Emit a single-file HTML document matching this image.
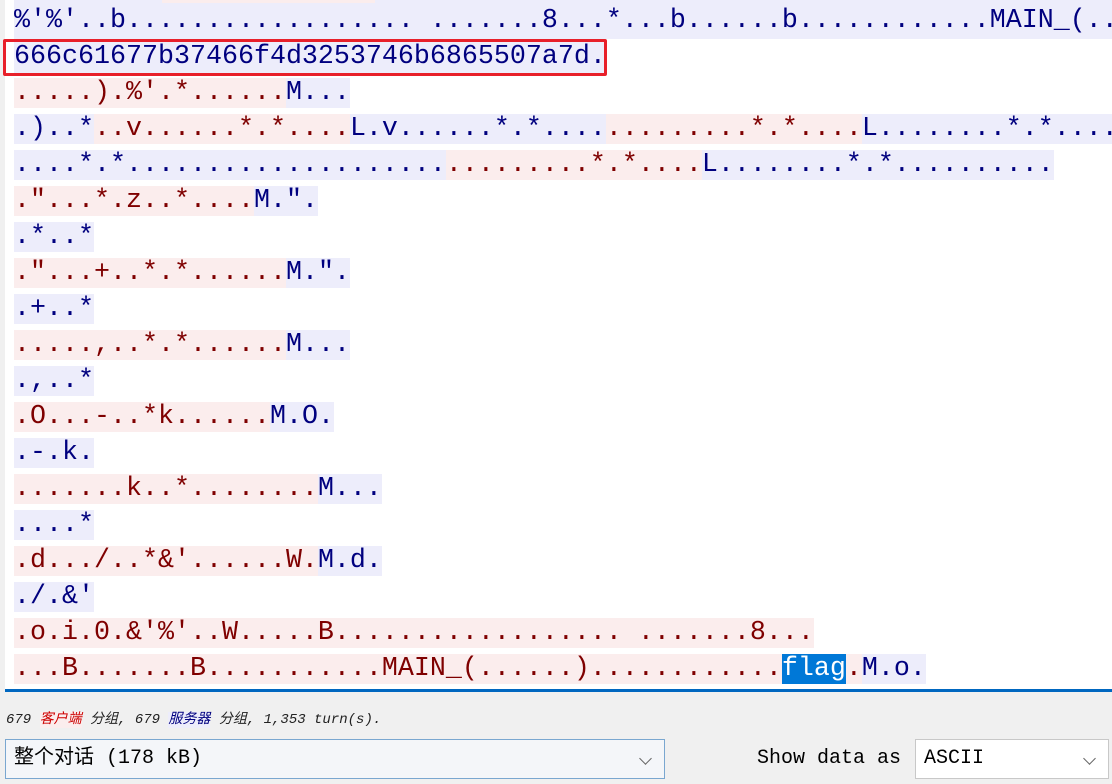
<!DOCTYPE html>
<html><head><meta charset="utf-8"><style>
*{margin:0;padding:0;box-sizing:border-box}
body{width:1112px;height:784px;overflow:hidden;background:#f0f0f0;position:relative;font-family:"Liberation Mono",monospace}
#txt{position:absolute;left:5px;top:0;width:1107px;height:689px;background:#fff;overflow:hidden}
.r{position:absolute;left:9px;height:36px;line-height:36px;white-space:pre;font-size:26.67px;font-family:"Liberation Mono",monospace}
.c{background:#fbeded;color:#7f0000}
.s{background:#ededfb;color:#00007f}
.h{background:#0078d7;color:#fff}
#box{position:absolute;left:3px;top:39px;width:604px;height:37px;border:3px solid #e8202a;border-radius:2px}
#line{position:absolute;left:5px;top:689px;width:1107px;height:3px;background:#0067c0}
#stat{position:absolute;left:6px;top:708px;font-size:14px;font-style:italic;color:#222;font-family:"Liberation Mono","Noto Sans CJK SC",monospace;white-space:pre}
#stat .cc{color:#c00;background:#fbeded}
#stat .ss{color:#00007f;background:#ededfb}
.combo{position:absolute;top:739px;height:40px;border:1px solid #7aa7d0;background:#f4f6f9;font-size:20px;line-height:38px;padding-left:8px;font-family:"Liberation Mono","Noto Sans CJK SC",monospace;color:#000}
.chev{position:absolute;right:14px;top:14px;width:9px;height:9px;border-right:1.5px solid #666;border-bottom:1.5px solid #666;transform:rotate(45deg)}
#show{position:absolute;left:757px;top:745px;font-size:20px;line-height:28px;white-space:pre;font-family:"Liberation Mono",monospace}
</style></head><body>
<div id="txt">
<div class="r s" style="top:-33px;width:1107px"></div>
<div class="r c" style="top:-33px;left:157px;width:213px"></div>
<div class="r s" style="top:3px">%'%'..b.................. .......8...*...b......b............MAIN_(...</div>
<div class="r s" style="top:39px">666c61677b37466f4d3253746b6865507a7d.</div>
<div class="r" style="top:75px"><span class="c">.....).%'.*......</span><span class="s">M...</span></div>
<div class="r" style="top:111px"><span class="s">.)..*</span><span class="c">..v......*.*....</span><span class="s">L.v......*.*....</span><span class="c">.........*.*....</span><span class="s">L........*.*.......</span></div>
<div class="r" style="top:147px"><span class="s">....*.*....................</span><span class="c">.........*.*....</span><span class="s">L........*.*..........</span></div>
<div class="r" style="top:183px"><span class="c">."...*.z..*....</span><span class="s">M.".</span></div>
<div class="r" style="top:219px"><span class="s">.*..*</span></div>
<div class="r" style="top:255px"><span class="c">."...+..*.*......</span><span class="s">M.".</span></div>
<div class="r" style="top:291px"><span class="s">.+..*</span></div>
<div class="r" style="top:327px"><span class="c">.....,..*.*......</span><span class="s">M...</span></div>
<div class="r" style="top:363px"><span class="s">.,..*</span></div>
<div class="r" style="top:399px"><span class="c">.O...-..*k......</span><span class="s">M.O.</span></div>
<div class="r" style="top:435px"><span class="s">.-.k.</span></div>
<div class="r" style="top:471px"><span class="c">.......k..*........</span><span class="s">M...</span></div>
<div class="r" style="top:507px"><span class="s">....*</span></div>
<div class="r" style="top:543px"><span class="c">.d.../..*&amp;'......W.</span><span class="s">M.d.</span></div>
<div class="r" style="top:579px"><span class="s">./.&amp;'</span></div>
<div class="r" style="top:615px"><span class="c">.o.i.0.&amp;'%'..W.....B.................. .......8...</span></div>
<div class="r" style="top:651px"><span class="c">...B.......B...........MAIN_(......)............</span><span class="h">flag</span><span class="c">.</span><span class="s">M.o.</span></div>
</div>
<div id="box"></div>
<div id="line"></div>
<div id="stat">679 <span class="cc">客户端</span> 分组, 679 <span class="ss">服务器</span> 分组, 1,353 turn(s).</div>
<div class="combo" style="left:5px;width:660px">整个对话 (178 kB)<div class="chev"></div></div>
<div id="show">Show data as</div>
<div class="combo" style="left:915px;width:194px;background:#fff;border-color:#c8c8c8">ASCII<div class="chev"></div></div>
</body></html>
